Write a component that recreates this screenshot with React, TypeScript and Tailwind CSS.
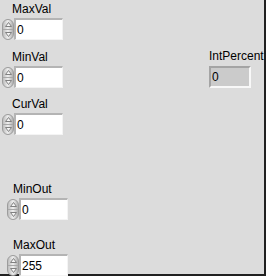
import React from 'react';

function Spinner() {
  return (
    <div className="flex h-[21px] w-[12px] flex-col overflow-hidden rounded-[6px] border border-[#9c9c9c] bg-gradient-to-r from-[#bdbdbd] via-[#f0f0f0] to-[#b0b0b0]">
      <div className="flex flex-1 items-center justify-center border-b border-[#a8a8a8]">
        <svg width="7" height="5" viewBox="0 0 7 5">
          <path d="M3.5 0.5 L6.5 4.5 L0.5 4.5 Z" fill="#f4f4f4" stroke="#808080" strokeWidth="1" />
        </svg>
      </div>
      <div className="flex flex-1 items-center justify-center">
        <svg width="7" height="5" viewBox="0 0 7 5">
          <path d="M0.5 0.5 L6.5 0.5 L3.5 4.5 Z" fill="#f4f4f4" stroke="#808080" strokeWidth="1" />
        </svg>
      </div>
    </div>
  );
}

function NumCtrl({ label, value, indent = 'ml-[10px]' }: { label: string; value: string; indent?: string }) {
  return (
    <div className="flex flex-col">
      <span className={`${indent} h-[14px] text-[12px] leading-[14px] text-black`}>{label}</span>
      <div className="mt-[2px] flex items-center">
        <Spinner />
        <div className="flex h-[22px] w-[49px] items-center border-t-2 border-l-2 border-b border-r border-t-[#b4b4b4] border-l-[#b4b4b4] border-b-[#f4f4f4] border-r-[#f4f4f4] bg-white pl-[1px] text-[12px] text-black">
          {value}
        </div>
      </div>
    </div>
  );
}

export default function App() {
  return (
    <div
      className="flex h-[276px] w-[266px] border-r-2 border-b-2 border-[#202020] bg-[#dcdcdc]"
      style={{ fontFamily: '"Liberation Sans", Arial, sans-serif' }}
    >
      <div className="flex w-[200px] flex-col pl-[2px] pt-[2px]">
        <NumCtrl label="MaxVal" value="0" />
        <div className="mt-[10px]">
          <NumCtrl label="MinVal" value="0" />
        </div>
        <div className="mt-[9px]">
          <NumCtrl label="CurVal" value="0" />
        </div>
        <div className="ml-[5px] mt-[47px]">
          <NumCtrl label="MinOut" value="0" indent="ml-[6px]" />
        </div>
        <div className="ml-[5px] mt-[18px]">
          <NumCtrl label="MaxOut" value="255" indent="ml-[6px]" />
        </div>
      </div>
      <div className="ml-[9px] flex flex-col pt-[49px]">
        <span className="h-[14px] text-[12px] leading-[14px] text-black">IntPercent</span>
        <div className="mt-[3px] flex h-[22px] w-[42px] items-center border-2 border-t-[#a4a4a4] border-l-[#a4a4a4] border-b-[#f8f8f8] border-r-[#f8f8f8] bg-[#cbcbcb] pl-[1px] text-[12px] text-black">
          0
        </div>
      </div>
    </div>
  );
}
